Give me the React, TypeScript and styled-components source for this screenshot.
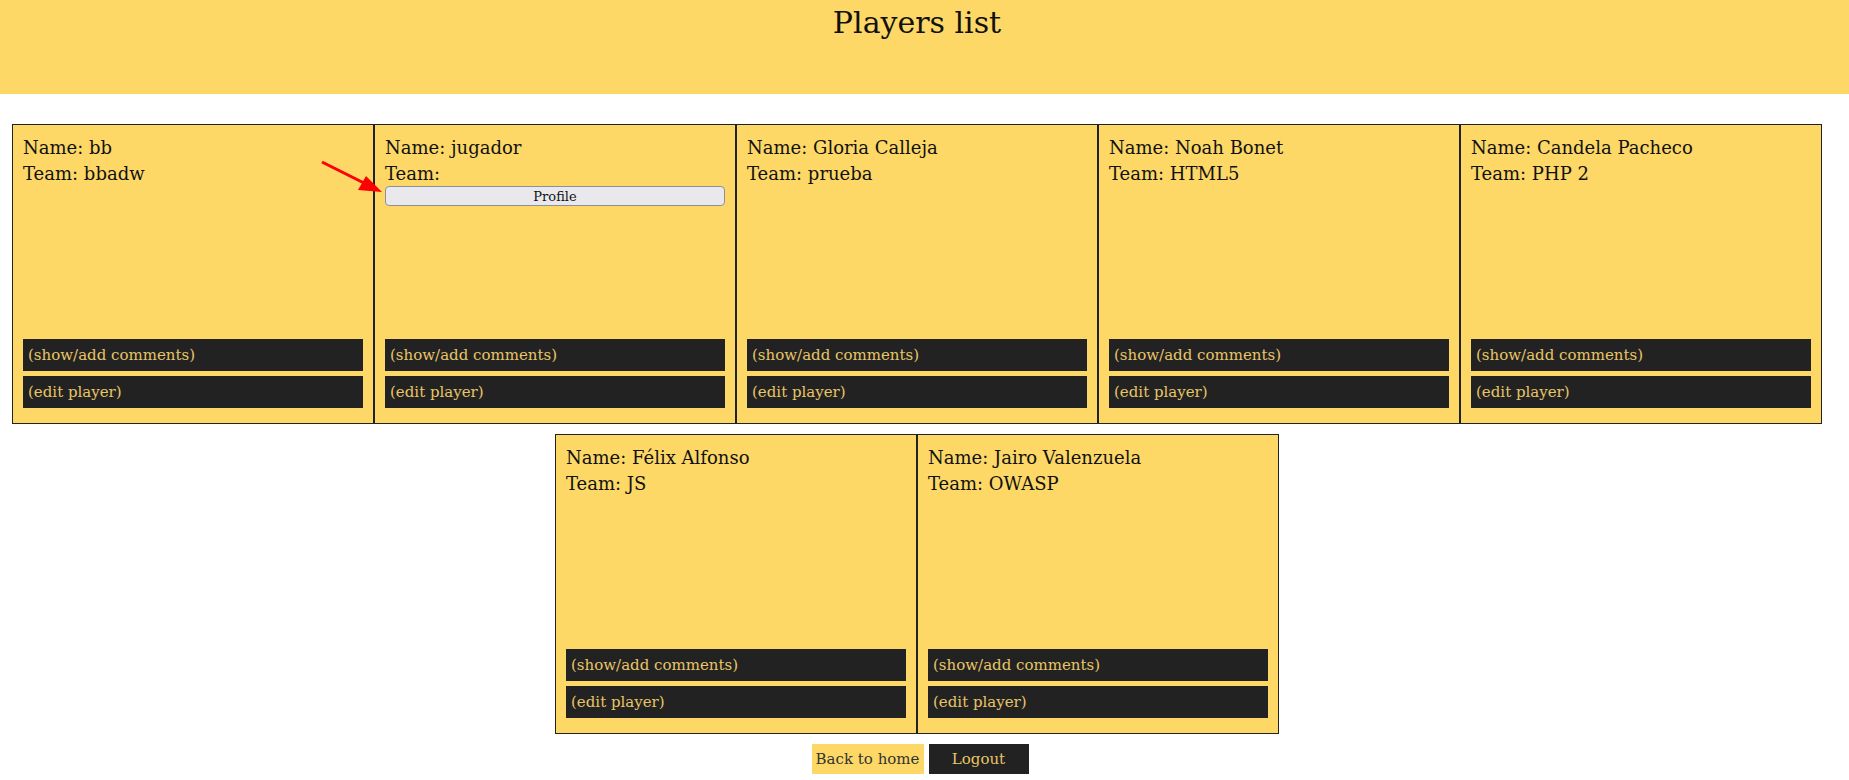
import styled, { createGlobalStyle } from 'styled-components';

const GlobalStyle = createGlobalStyle`
  body {
    margin: 0;
    background: #fff;
    font-family: "DejaVu Serif", "Liberation Serif", serif;
    color: #111;
  }
`;

const Header = styled.header`
  background-color: #fdd866;
  height: 94px;
  padding-right: 15px;
  text-align: center;
`;

const Title = styled.h1`
  margin: 0;
  padding-top: 4px;
  font-size: 30px;
  font-weight: normal;
  line-height: 38px;
`;

const Page = styled.div`
  position: relative;
  width: 1834px;
`;

const PlayerGrid = styled.div`
  display: flex;
  flex-wrap: wrap;
  justify-content: center;
  padding-top: 20px;
`;

const PlayerCard = styled.div`
  box-sizing: border-box;
  width: 362px;
  height: 300px;
  margin-top: 10px;
  padding: 10px;
  border: 1px solid #222;
  background-color: #fdd866;
  display: flex;
  flex-direction: column;
`;

const InfoLine = styled.div`
  font-size: 18px;
  line-height: 26px;
`;

const ProfileButton = styled.button`
  width: 100%;
  height: 20px;
  margin-top: -1px;
  padding: 0;
  font-family: "DejaVu Serif", serif;
  font-size: 13px;
  color: #111;
  background-color: #e9e9ed;
  border: 1px solid #8f8f9d;
  border-radius: 4px;
`;

const Actions = styled.div`
  margin-top: auto;
  display: flex;
  flex-direction: column;
  gap: 5px;
  padding-bottom: 5px;
`;

const DarkLink = styled.a`
  display: block;
  height: 32px;
  line-height: 32px;
  padding-left: 5px;
  background-color: #222;
  color: #e8c567;
  font-size: 15px;
  text-decoration: none;
`;

const Footer = styled.div`
  display: flex;
  justify-content: center;
  gap: 5px;
  margin-top: 10px;
  padding-left: 6px;
`;

const FooterButton = styled.a<{ $dark?: boolean }>`
  display: block;
  box-sizing: border-box;
  height: 30px;
  line-height: 30px;
  text-align: center;
  font-size: 15px;
  text-decoration: none;
  width: ${(p) => (p.$dark ? '100px' : '112px')};
  background-color: ${(p) => (p.$dark ? '#222' : '#fdd866')};
  color: ${(p) => (p.$dark ? '#e8c567' : '#333')};
`;

const Arrow = styled.svg`
  position: absolute;
  left: 318px;
  top: 62px;
  overflow: visible;
`;

const players = [
  { name: 'bb', team: 'bbadw' },
  { name: 'jugador', team: '', profile: true },
  { name: 'Gloria Calleja', team: 'prueba' },
  { name: 'Noah Bonet', team: 'HTML5' },
  { name: 'Candela Pacheco', team: 'PHP 2' },
  { name: 'Félix Alfonso', team: 'JS' },
  { name: 'Jairo Valenzuela', team: 'OWASP' },
];

export default function App() {
  return (
    <>
      <GlobalStyle />
      <Header>
        <Title>Players list</Title>
      </Header>
      <Page>
        <PlayerGrid>
          {players.map((p) => (
            <PlayerCard key={p.name}>
              <InfoLine>Name: {p.name}</InfoLine>
              <InfoLine>Team: {p.team}</InfoLine>
              {p.profile && <ProfileButton>Profile</ProfileButton>}
              <Actions>
                <DarkLink href="#">(show/add comments)</DarkLink>
                <DarkLink href="#">(edit player)</DarkLink>
              </Actions>
            </PlayerCard>
          ))}
        </PlayerGrid>
        <Footer>
          <FooterButton href="#">Back to home</FooterButton>
          <FooterButton href="#" $dark>Logout</FooterButton>
        </Footer>
        <Arrow width="70" height="40" viewBox="0 0 70 40">
          <line x1="4" y1="6" x2="48" y2="28" stroke="#f00" strokeWidth="3" />
          <polygon points="64,36 40,34 48,20" fill="#f00" />
        </Arrow>
      </Page>
    </>
  );
}
